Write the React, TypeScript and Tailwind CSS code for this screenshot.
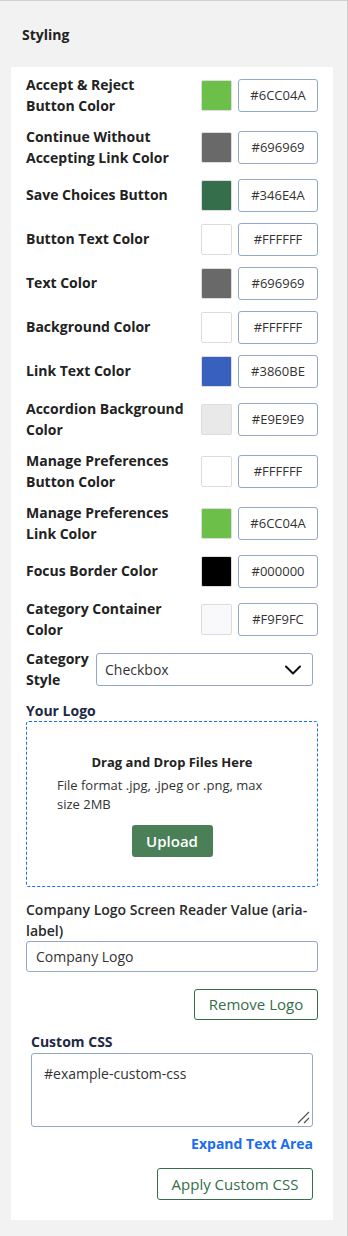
import React from "react";

const rows: { label: string; color: string; hex: string }[] = [
  { label: "Accept & Reject Button Color", color: "#6CC04A", hex: "#6CC04A" },
  { label: "Continue Without Accepting Link Color", color: "#696969", hex: "#696969" },
  { label: "Save Choices Button", color: "#346E4A", hex: "#346E4A" },
  { label: "Button Text Color", color: "#FFFFFF", hex: "#FFFFFF" },
  { label: "Text Color", color: "#696969", hex: "#696969" },
  { label: "Background Color", color: "#FFFFFF", hex: "#FFFFFF" },
  { label: "Link Text Color", color: "#3860BE", hex: "#3860BE" },
  { label: "Accordion Background Color", color: "#E9E9E9", hex: "#E9E9E9" },
  { label: "Manage Preferences Button Color", color: "#FFFFFF", hex: "#FFFFFF" },
  { label: "Manage Preferences Link Color", color: "#6CC04A", hex: "#6CC04A" },
  { label: "Focus Border Color", color: "#000000", hex: "#000000" },
  { label: "Category Container Color", color: "#F9F9FC", hex: "#F9F9FC" },
];

export default function App() {
  return (
    <div
      className="w-[348px] h-[1236px] bg-[#f2f2f2] border-t border-r border-[#d0d0d0] text-[#222]"
      style={{ fontFamily: '"Open Sans", "Noto Sans", sans-serif' }}
    >
      <div className="h-[66px] flex items-center pl-[22px] text-[14px] font-bold text-[#222]">
        Styling
      </div>
      <div className="mx-[11px] w-[322px] bg-white px-[15px] pt-[8px] pb-[20px]">
        <div className="flex flex-col gap-[11px]">
          {rows.map((r) => (
            <div key={r.label} className="flex items-center">
              <div className="flex-1 pr-[16px] text-[14px] leading-[20.5px] font-bold text-[#222]">
                {r.label}
              </div>
              <div
                className="w-[31px] h-[31px] rounded-[2px] border border-[#dcdcdc] mr-[6px]"
                style={{ backgroundColor: r.color }}
              />
              <div className="w-[80px] h-[33px] rounded-[3px] border border-[#93a9c9] flex items-center justify-center text-[13px] text-[#333]">
                {r.hex}
              </div>
            </div>
          ))}
          <div className="flex items-center -mt-[2px]">
            <div className="w-[70px] text-[14px] leading-[20.5px] font-bold text-[#222]">
              Category Style
            </div>
            <div className="flex-1 mr-[5px] h-[33px] rounded-[3px] border border-[#93a9c9] flex items-center justify-between pl-[8px] pr-[11px] text-[14px] text-[#333]">
              <span>Checkbox</span>
              <svg width="16" height="10" viewBox="0 0 16 10" fill="none">
                <path d="M1 1.5 L8 8.5 L15 1.5" stroke="#111" strokeWidth="2" strokeLinecap="round" strokeLinejoin="round" />
              </svg>
            </div>
          </div>
        </div>

        <div className="mt-[11px] text-[14px] leading-[20px] font-bold text-[#1d2945]">Your Logo</div>
        <div className="h-[166px] rounded-[3px] border border-dashed border-[#1a6cf0] flex flex-col items-center pt-[30px]">
          <div className="text-[13px] leading-[20px] font-bold text-[#222]">Drag and Drop Files Here</div>
          <div className="mt-[4px] w-[230px] text-[13px] leading-[19px] text-[#333]">
            File format .jpg, .jpeg or .png, max size 2MB
          </div>
          <div className="mt-[11px] w-[81px] h-[32px] rounded-[3px] bg-[#4a7f58] text-white text-[15px] font-semibold flex items-center justify-center">
            Upload
          </div>
        </div>

        <div className="mt-[12px] text-[14px] leading-[21px] font-semibold text-[#2a2a2a]">
          Company Logo Screen Reader Value (aria-label)
        </div>
        <div className="mt-[0px] h-[31px] rounded-[3px] border border-[#93a9c9] flex items-center pl-[9px] text-[14px] text-[#333]">
          Company Logo
        </div>
        <div className="mt-[17px] flex justify-end">
          <div className="w-[124px] h-[31px] rounded-[3px] border border-[#346e4a] text-[#346e4a] text-[15px] flex items-center justify-center">
            Remove Logo
          </div>
        </div>

        <div className="mx-[5px]">
          <div className="mt-[12px] text-[14px] leading-[20px] font-bold text-[#1d2945]">Custom CSS</div>
          <div className="relative mt-[1px] h-[74px] rounded-[3px] border border-[#93a9c9] pl-[12px] pt-[10px] text-[14px] leading-[20px] text-[#333]">
            #example-custom-css
            <svg className="absolute right-[2px] bottom-[2px]" width="14" height="14" viewBox="0 0 14 14" fill="none">
              <path d="M2 13 L13 2 M8 13 L13 8" stroke="#555" strokeWidth="1.2" />
            </svg>
          </div>
          <div className="mt-[7px] flex justify-end text-[14px] leading-[20px] font-bold text-[#1a6cf0]">
            Expand Text Area
          </div>
          <div className="mt-[14px] flex justify-end">
            <div className="w-[156px] h-[32px] rounded-[3px] border border-[#346e4a] text-[#346e4a] text-[15px] flex items-center justify-center">
              Apply Custom CSS
            </div>
          </div>
        </div>
      </div>
    </div>
  );
}
